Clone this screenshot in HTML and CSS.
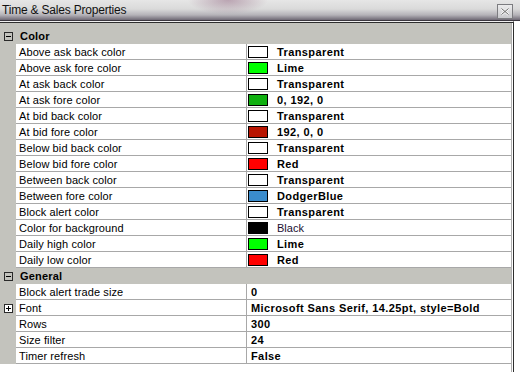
FILE: index.html
```html
<!DOCTYPE html>
<html>
<head>
    <title>Time &amp; Sales Properties</title>
    <link rel="stylesheet" href="styles.css">
</head>
<body>
    <div class="window">
        <!-- Title bar -->
        <div class="titlebar">
            <span class="title">Time &amp; Sales Properties</span>
            <span class="close">
                <svg width="10" height="9" viewBox="0 0 10 9"><path d="M1.5 1.5 L8.5 7.5 M8.5 1.5 L1.5 7.5" stroke="#f4f4f4" stroke-width="2.4"/><path d="M1.5 1.5 L8.5 7.5 M8.5 1.5 L1.5 7.5" stroke="#6a6a6a" stroke-width="1"/></svg>
            </span>
        </div>

        <!-- Property grid -->
        <div class="grid">
            <div class="list">
                <div class="grid-top"></div>

                <div class="category">
                    <span class="gutter"><svg class="toggle" width="9" height="9" viewBox="0 0 9 9"><rect x="0.5" y="0.5" width="8" height="8" fill="none" stroke="#2a2a2a"/><path d="M2 4.5 H7" stroke="#000"/></svg></span>
                    <span class="cat-name">Color</span>
                </div>
                <div class="row"><span class="gutter"></span><span class="label">Above ask back color</span><span class="value"><span class="swatch sw-none"></span><b>Transparent</b></span></div>
                <div class="row"><span class="gutter"></span><span class="label">Above ask fore color</span><span class="value"><span class="swatch sw-lime"></span><b>Lime</b></span></div>
                <div class="row"><span class="gutter"></span><span class="label">At ask back color</span><span class="value"><span class="swatch sw-none"></span><b>Transparent</b></span></div>
                <div class="row"><span class="gutter"></span><span class="label">At ask fore color</span><span class="value"><span class="swatch sw-green"></span><b>0, 192, 0</b></span></div>
                <div class="row"><span class="gutter"></span><span class="label">At bid back color</span><span class="value"><span class="swatch sw-none"></span><b>Transparent</b></span></div>
                <div class="row"><span class="gutter"></span><span class="label">At bid fore color</span><span class="value"><span class="swatch sw-darkred"></span><b>192, 0, 0</b></span></div>
                <div class="row"><span class="gutter"></span><span class="label">Below bid back color</span><span class="value"><span class="swatch sw-none"></span><b>Transparent</b></span></div>
                <div class="row"><span class="gutter"></span><span class="label">Below bid fore color</span><span class="value"><span class="swatch sw-red"></span><b>Red</b></span></div>
                <div class="row"><span class="gutter"></span><span class="label">Between back color</span><span class="value"><span class="swatch sw-none"></span><b>Transparent</b></span></div>
                <div class="row"><span class="gutter"></span><span class="label">Between fore color</span><span class="value"><span class="swatch sw-blue"></span><b>DodgerBlue</b></span></div>
                <div class="row"><span class="gutter"></span><span class="label">Block alert color</span><span class="value"><span class="swatch sw-none"></span><b>Transparent</b></span></div>
                <div class="row"><span class="gutter"></span><span class="label">Color for background</span><span class="value"><span class="swatch sw-black"></span><span class="default">Black</span></span></div>
                <div class="row"><span class="gutter"></span><span class="label">Daily high color</span><span class="value"><span class="swatch sw-lime"></span><b>Lime</b></span></div>
                <div class="row"><span class="gutter"></span><span class="label">Daily low color</span><span class="value"><span class="swatch sw-red"></span><b>Red</b></span></div>

                <div class="category">
                    <span class="gutter"><svg class="toggle" width="9" height="9" viewBox="0 0 9 9"><rect x="0.5" y="0.5" width="8" height="8" fill="none" stroke="#2a2a2a"/><path d="M2 4.5 H7" stroke="#000"/></svg></span>
                    <span class="cat-name">General</span>
                </div>
                <div class="row"><span class="gutter"></span><span class="label">Block alert trade size</span><span class="value text"><b>0</b></span></div>
                <div class="row"><span class="gutter"><svg class="toggle" width="9" height="9" viewBox="0 0 9 9"><rect x="0.5" y="0.5" width="8" height="8" fill="#fff" stroke="#2a2a2a"/><path d="M2 4.5 H7 M4.5 2 V7" stroke="#000"/></svg></span><span class="label">Font</span><span class="value text"><b>Microsoft Sans Serif, 14.25pt, style=Bold</b></span></div>
                <div class="row"><span class="gutter"></span><span class="label">Rows</span><span class="value text"><b>300</b></span></div>
                <div class="row"><span class="gutter"></span><span class="label">Size filter</span><span class="value text"><b>24</b></span></div>
                <div class="row"><span class="gutter"></span><span class="label">Timer refresh</span><span class="value text"><b>False</b></span></div>
            </div>
        </div>
    </div>
</body>
</html>
```

FILE: styles.css
```css
/* Window frame */
body {
    margin: 0;
    background-color: #fff;
    font-family: "Liberation Sans", Arial, sans-serif;
    font-size: 11px;
    color: #000;
}

.window {
    width: 520px;
    height: 372px;
    display: flex;
    flex-direction: column;
    overflow: hidden;
}

/* Glass-like title bar */
.titlebar {
    height: 20px;
    flex-shrink: 0;
    display: flex;
    align-items: flex-start;
    justify-content: space-between;
    border-bottom: 1px solid #3c3840;
    background:
        radial-gradient(ellipse 40px 14px at 228px 0, rgba(150, 110, 135, 0.55), transparent),
        linear-gradient(#e6e6e6, #dadada 45%, #b4b2b8 75%, #6e6874);
}

.title {
    font-size: 12px;
    letter-spacing: -0.2px;
    padding: 3px 0 0 2px;
    color: #111;
}

.close {
    width: 16px;
    height: 15px;
    box-sizing: border-box;
    margin: 4px 7px 0 0;
    border: 1px solid #7c7c80;
    background: linear-gradient(#ececec, #c8c8cc);
    display: flex;
    align-items: center;
    justify-content: center;
}

/* Property grid */
.grid {
    flex: 1;
    width: 514px;
    border-top: 1px solid #f0f0f0;
    box-shadow: inset 0 1px 0 #2e2e2e;
    border-right: 1px solid #2e2e2e;
    padding-top: 1px;
    padding-right: 1px;
    box-sizing: border-box;
    display: flex;
}

.list {
    flex: 1;
    border-right: 1px solid #b0b0b0;
}

.grid-top {
    height: 5px;
    background-color: #c3c3bd;
}

.row, .category {
    height: 16px;
    box-sizing: border-box;
    display: flex;
    line-height: 15px;
}

.category {
    background-color: #c3c3bd;
    border-bottom: 1px solid #c3c3bd;
}

.row {
    border-bottom: 1px solid #a8a8a8;
}

.gutter {
    width: 16px;
    flex-shrink: 0;
    background-color: #c3c3bd;
    margin-bottom: -1px;
    display: flex;
    align-items: flex-start;
}

.toggle {
    margin: 4px 0 0 4px;
}

.cat-name {
    font-weight: bold;
    letter-spacing: 0.2px;
    padding: 1px 0 0 4px;
}

.label {
    width: 231px;
    flex-shrink: 0;
    padding: 1px 0 0 3px;
    box-sizing: border-box;
    background-color: #fff;
    border-right: 1px solid #a8a8a8;
    letter-spacing: 0.1px;
    white-space: nowrap;
}

.value {
    flex: 1;
    display: flex;
    align-items: flex-start;
    padding-top: 1px;
    white-space: nowrap;
}

.value b {
    letter-spacing: 0.4px;
}

.value.text {
    padding-left: 4px;
}

.default {
    color: #1a1030;
}

/* Colour swatches */
.swatch {
    width: 20px;
    height: 12px;
    box-sizing: border-box;
    border: 1px solid #000;
    margin: 1px 9px 0 1px;
    flex-shrink: 0;
}

.sw-none { background-color: #fff; }
.sw-lime { background-color: #00ff00; }
.sw-green { background-color: #10b010; }
.sw-darkred { background-color: #b81400; }
.sw-red { background-color: #ff0000; }
.sw-blue { background-color: #3a8ccc; }
.sw-black { background-color: #000; }
```
